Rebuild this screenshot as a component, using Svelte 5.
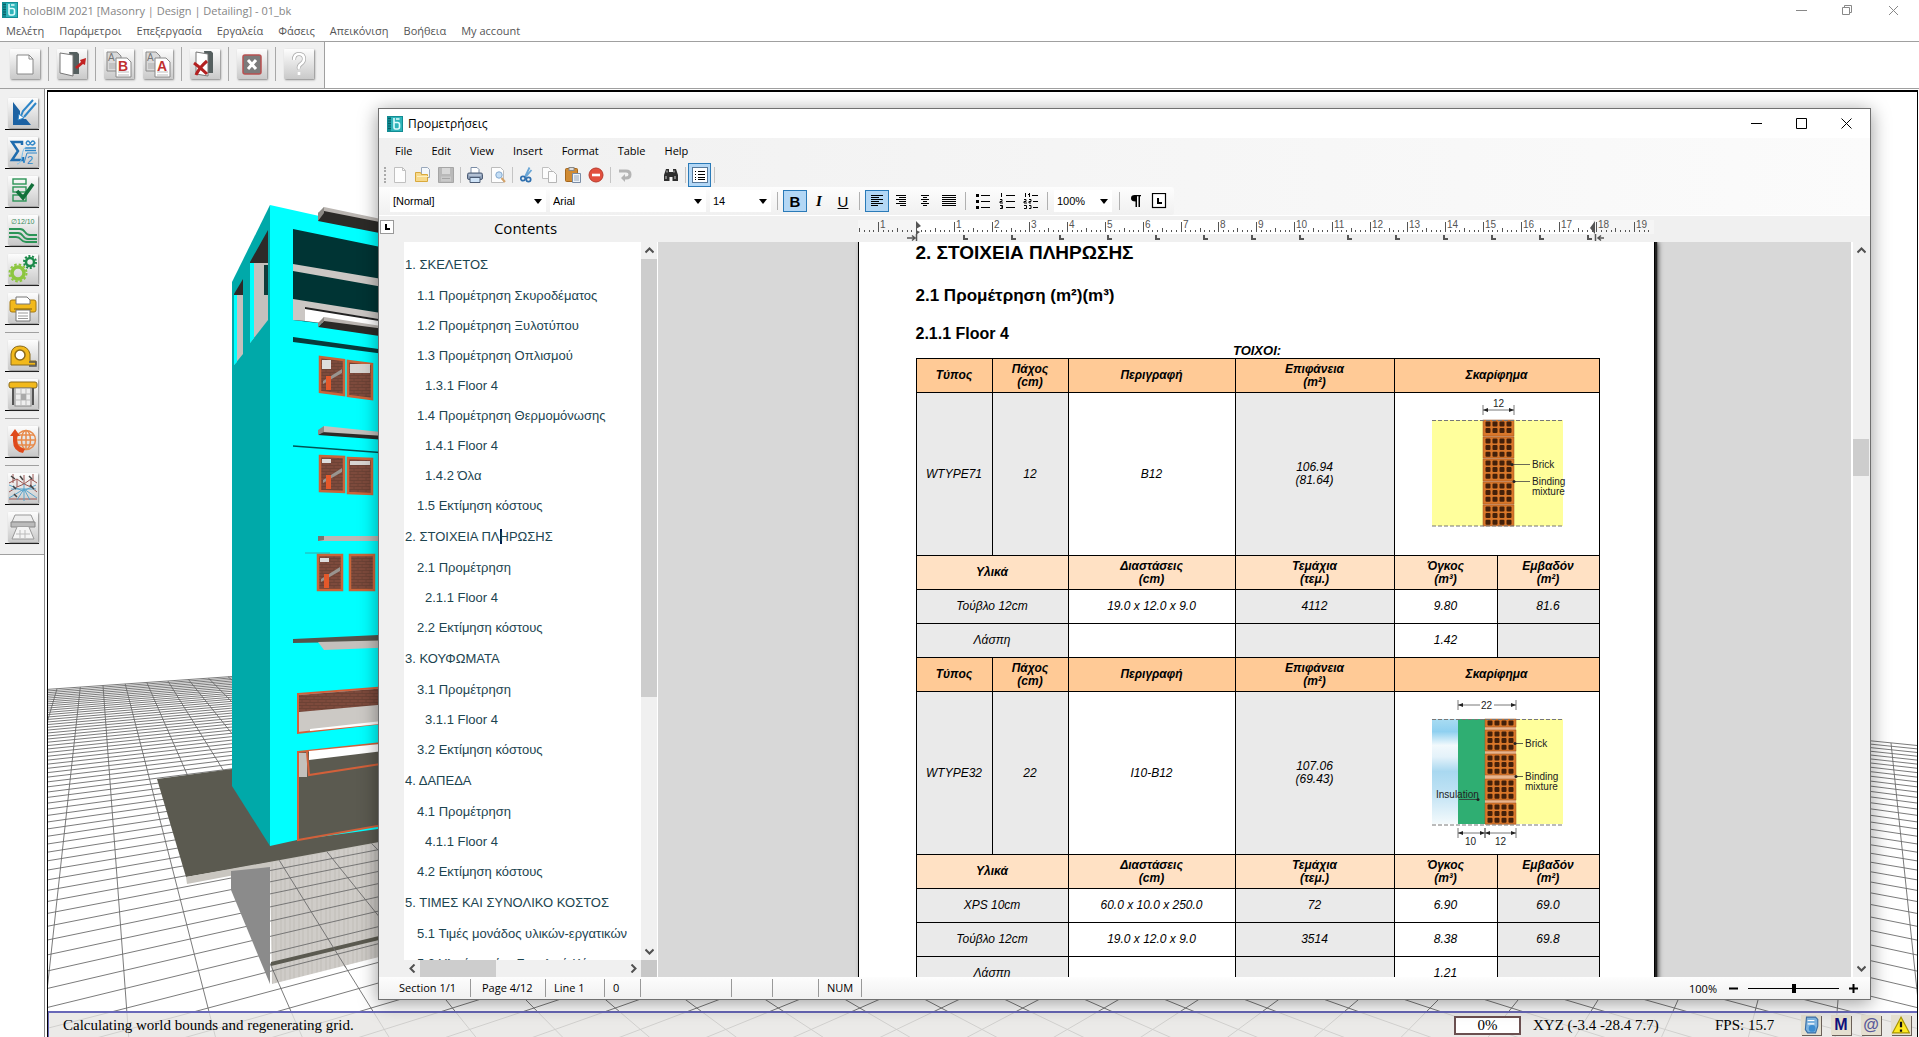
<script>
  const mainMenu = ['Μελέτη', 'Παράμετροι', 'Επεξεργασία', 'Εργαλεία', 'Φάσεις', 'Απεικόνιση', 'Βοήθεια', 'My account'];
  const mainTools = [['new'], ['exit'], ['copyB', 'copyA'], ['discard'], ['stop'], ['help']];
  const sideTools = [
    ['draft', 'sigma', 'check', 'rebar', 'gears', 'printer'],
    ['tape', 'plotter'],
    ['globe'],
    ['mesh', 'scanner']
  ];
  const dialogMenu = ['File', 'Edit', 'View', 'Insert', 'Format', 'Table', 'Help'];
  const fileTools = [['page', 'open', 'save'], ['print', 'preview'], ['cut', 'copy', 'paste', 'delete'], ['undo', 'redo', 'find']];

  const contents = [
    [1, '1. ΣΚΕΛΕΤΟΣ'], [2, '1.1 Προμέτρηση Σκυροδέματος'], [2, '1.2 Προμέτρηση Ξυλοτύπου'],
    [2, '1.3 Προμέτρηση Οπλισμού'], [3, '1.3.1 Floor 4'], [2, '1.4 Προμέτρηση Θερμομόνωσης'],
    [3, '1.4.1 Floor 4'], [3, '1.4.2 Όλα'], [2, '1.5 Εκτίμηση κόστους'],
    [1, '2. ΣΤΟΙΧΕΙΑ ΠΛ', 'ΗΡΩΣΗΣ'], [2, '2.1 Προμέτρηση'], [3, '2.1.1 Floor 4'], [2, '2.2 Εκτίμηση κόστους'],
    [1, '3. ΚΟΥΦΩΜΑΤΑ'], [2, '3.1 Προμέτρηση'], [3, '3.1.1 Floor 4'], [2, '3.2 Εκτίμηση κόστους'],
    [1, '4. ΔΑΠΕΔΑ'], [2, '4.1 Προμέτρηση'], [3, '4.1.1 Floor 4'], [2, '4.2 Εκτίμηση κόστους'],
    [1, '5. ΤΙΜΕΣ ΚΑΙ ΣΥΝΟΛΙΚΟ ΚΟΣΤΟΣ'], [2, '5.1 Τιμές μονάδος υλικών-εργατικών'], [2, '5.2 Υλικά κτιρίου Συνολικά Κόστη']
  ];

  const walls = [
    { type: 'WTYPE71', thick: '12', desc: 'B12', area: '106.94', net: '(81.64)', pic: 1,
      rows: [['Τούβλο 12cm', '19.0 x 12.0 x 9.0', '4112', '9.80', '81.6'], ['Λάσπη', '', '', '1.42', '']] },
    { type: 'WTYPE32', thick: '22', desc: 'I10-B12', area: '107.06', net: '(69.43)', pic: 2,
      rows: [['XPS 10cm', '60.0 x 10.0 x 250.0', '72', '6.90', '69.0'], ['Τούβλο 12cm', '19.0 x 12.0 x 9.0', '3514', '8.38', '69.8'], ['Λάσπη', '', '', '1.21', '']] }
  ];

  // Ground grid: two families of lines, each running to its own vanishing point.
  const vpA = { x: 1872, y: 562 };
  const vpB = { x: 94, y: 562 };
  const base = 1000;
  function cross(vp1, x1, vp2, x2) {
    const m1 = (x1 - vp1.x) / (base - vp1.y);
    const m2 = (x2 - vp2.x) / (base - vp2.y);
    const t = (vp2.x - vp1.x) / (m1 - m2);
    return [vp1.x + m1 * t, vp1.y + t];
  }
  const edgeA = 1678 - 80 * 76;
  const edgeB = 126 + 80 * 54;
  let gridPath = '';
  for (let k = -76; k < 12; k++) {
    const x = 1678 + 80 * k;
    const [px, py] = cross(vpA, x, vpB, edgeB);
    const f = 2;
    gridPath += `M${px.toFixed(1)} ${py.toFixed(1)}L${(vpA.x + (x - vpA.x) * f).toFixed(1)} ${vpA.y + 438 * f}`;
  }
  for (let k = -12; k <= 54; k++) {
    const x = 126 + 80 * k;
    const [px, py] = cross(vpB, x, vpA, edgeA);
    const f = 2;
    gridPath += `M${px.toFixed(1)} ${py.toFixed(1)}L${(vpB.x + (x - vpB.x) * f).toFixed(1)} ${vpB.y + 438 * f}`;
  }

  // Ruler, 96 px per inch, zero at the left text margin.
  const cm = 37.8;
  const zero = 58;
  const ticks = [];
  for (let i = -12; i <= 156; i++) {
    const x = zero + (i * cm) / 8;
    if (x > 1 && x < 794) ticks.push({ x: Math.round(x), size: i % 8 === 0 ? 10 : i % 4 === 0 ? 4 : 2 });
  }
  const labels = [];
  for (let n = -1; n <= 19; n++) if (n !== 0) labels.push({ x: Math.round(zero + n * cm), n: Math.abs(n) });
  const stops = Array.from({ length: 14 }, (_, i) => zero + 48 * (i + 1));

  const bricks1 = [[24, 16, 2], [41, 21, 3], [63, 22, 3], [86, 22, 3], [109, 21, 3]];
  const bricks2 = [[24, 8, 1], [35, 21, 3], [59, 21, 3], [84, 21, 3], [108, 21, 3]];
  const windows = [
    { x: 320, y: 357, k: 3 }, { x: 348, y: 361, k: 3 }, { x: 320, y: 456, k: 1 },
    { x: 348, y: 458, k: 1 }, { x: 318, y: 555, k: 0 }, { x: 350, y: 555, k: 0 }
  ];
  let zoom = $state(50);
</script>

{#snippet logo()}
  <svg class="logo" viewBox="0 0 16 16" aria-hidden="true">
    <rect width="16" height="16" fill="#128c93" />
    <rect x="4" y="1" width="11" height="14" fill="#2fb4ba" />
    <path d="M1 2.500h3M1 5h3M1 7.500h3M1 10h3M1 12.500h3" stroke="#0a5f66" />
    <path d="M7 2v9.500q0 1.500 1.500 1.500h2q2 0 2-2V8.500q0-2-2-2H7M9 3h3.500" fill="none" stroke="#dffcfd" stroke-width="1.600" />
  </svg>
{/snippet}

{#snippet bigIcon(name)}
  <svg class="big" viewBox="0 0 30 30" aria-hidden="true">
    {#if name === 'new'}
      <path d="M7 6h12l4 4v15H7z" fill="#fff" stroke="#888" /><path d="M19 6v4h4" fill="none" stroke="#888" />
    {:else if name === 'exit'}
      <path d="M12 3h8l2 2v20h-6z" fill="#555f5f" /><path d="M3 4l13 2v21L3 24z" fill="#fff" stroke="#777" />
      <path d="M18 18l6-5-1-2 6-2-1 7-2-1-6 5z" fill="#c22222" />
    {:else if name === 'copyB' || name === 'copyA'}
      <path d="M3 3h10l4 4v15H3z" fill="#dadada" stroke="#888" /><path d="M5 15h8M5 17h8M5 19h8" stroke="#aaa" />
      <text x="4" y="12" font-size="10" fill="#777">A</text>
      <path d="M12 9h11l4 4v15H12z" fill="#fff" stroke="#888" /><path d="M14 23h11M14 26h11" stroke="#bbb" />
      <text x="14" y="22" font-size="14" font-weight="700" fill="#c03030">{name === 'copyB' ? 'B' : 'A'}</text>
    {:else if name === 'discard'}
      <path d="M14 2h7l2 2v20h-6z" fill="#555f5f" /><path d="M6 3l12 2v22L6 25z" fill="#fff" stroke="#777" />
      <path d="M4 14q7 5 13 11M17 12Q9 19 6 26" fill="none" stroke="#b32020" stroke-width="3" />
    {:else if name === 'stop'}
      <rect x="6" y="6" width="18" height="19" rx="2" fill="#7b7b7b" stroke="#b85050" stroke-width="1.500" />
      <path d="M11 11l8 9M19 11l-8 9" stroke="#fff" stroke-width="3" />
    {:else if name === 'help'}
      <path d="M10 11q0-6 5-6t5 5q0 3-3 5t-2 5" fill="none" stroke="#aaa" stroke-width="4" /><path d="M10 11q0-6 5-6t5 5q0 3-3 5t-2 5M15 23v3" fill="none" stroke="#fff" stroke-width="2.600" />
    {:else if name === 'draft'}
      <path d="M5 4v23h18l-5-6h-6V13z" fill="#1c62a3" /><path d="M13 18l2-5L25 2M16 19L28 5" stroke="#2e86c8" stroke-width="2" fill="none" /><path d="M10 22l1-6 5 4z" fill="#fff" stroke="#2e86c8" />
    {:else if name === 'sigma'}
      <path d="M14 8V5H4l6 9-6 9h11v-3" fill="none" stroke="#1f6cae" stroke-width="2.500" /><path d="M18 6q2-4 4 0t5 0q-2-4-4.500 0t-4.500 0M17 11h11M17 13.500h11" fill="none" stroke="#2e86c8" stroke-width="1.300" />
      <path d="M14 20l2 6 3-10h10" fill="none" stroke="#2e86c8" /><text x="19" y="27" font-size="11" fill="#2e86c8">2</text><path d="M9 27q4 0 5-8t4-9" fill="none" stroke="#7cc0ea" />
    {:else if name === 'check'}
      <g fill="none" stroke="#2b9456" stroke-width="1.400"><rect x="5" y="3" width="13" height="5" /><rect x="5" y="11" width="13" height="5" /><rect x="5" y="19" width="13" height="6" /></g>
      <path d="M9 15l6 7L25 8" fill="none" stroke="#12703a" stroke-width="3.500" />
    {:else if name === 'rebar'}
      <text x="3" y="9" font-size="7" fill="#3a8a5c">∅12/10</text>
      <g fill="none" stroke="#2b9456" stroke-width="1.800"><path d="M1 14h11q3 0 5 3t5 3h7M1 18h9q3 0 5 3t5 3h9M1 22h7q3 0 5 2.500t5 2.500h11" /></g>
    {:else if name === 'gears'}
      <circle cx="10" cy="19" r="6" fill="none" stroke="#8cc63f" stroke-width="3.500" /><circle cx="10" cy="19" r="8.500" fill="none" stroke="#8cc63f" stroke-width="2" stroke-dasharray="2.500 2" />
      <circle cx="22" cy="8" r="4" fill="none" stroke="#1c8a4a" stroke-width="2.500" /><circle cx="22" cy="8" r="6" fill="none" stroke="#1c8a4a" stroke-width="2" stroke-dasharray="2 1.700" />
    {:else if name === 'printer'}
      <rect x="2" y="7" width="26" height="12" rx="2" fill="#f2b91c" stroke="#a67a10" /><path d="M8 11V4h11l3 3v4z" fill="#fff" stroke="#777" /><path d="M8 17h14v11H8z" fill="#fff" stroke="#777" /><path d="M10 20h10M10 23h10M10 25.500h10" stroke="#999" /><path d="M6 16h18" stroke="#7b5a0c" />
    {:else if name === 'tape'}
      <path d="M3 25V14Q4 6 12 6t10 8v7h6v4z" fill="#f2b91c" stroke="#8a6a1a" /><circle cx="12" cy="15" r="5" fill="#fff" stroke="#8a6a1a" stroke-width="1.500" /><path d="M21 22h7v4h-7" fill="none" stroke="#555" stroke-width="1.500" />
    {:else if name === 'plotter'}
      <rect x="1" y="3" width="28" height="6" rx="2" fill="#f2b91c" stroke="#8a6a1a" /><path d="M5 9v17M25 9v17" stroke="#555" stroke-width="2" /><rect x="7" y="9" width="16" height="18" fill="#eee" stroke="#888" /><path d="M7 15h16M7 21h16M13 9v18M18 9v18" stroke="#bbb" /><rect x="13" y="15" width="5" height="6" fill="#aaa" />
    {:else if name === 'globe'}
      <g fill="none" stroke="#e88a4a" stroke-width="1.500"><circle cx="18" cy="14" r="9.500" /><ellipse cx="18" cy="14" rx="4.500" ry="9.500" /><path d="M9 14h18M10 9h16M10 19h16M18 4v20" /></g>
      <path d="M15 27Q5 25 5 15V10H2l5-7 5 7H9v5q0 6 8 8z" fill="#df4a1c" />
    {:else if name === 'mesh'}
      <path d="M1 10l8-4 7 5 7-5 6 4M1 19l8-5 7-3 7 3 6 5M5 1v9M16 2v8M25 1v7M9 6v8M23 6v8M1 26h28" stroke="#9a5550" fill="none" /><path d="M1 25l15-9 13 9M16 11v17M3 16h25M1 12l14 6 13-6M9 27l7-11 6 11" fill="none" stroke="#5aa5cc" /><path d="M3 3l4 3M12 3l3 4M21 3l3 3M5 13l3 3M22 12l4 4M6 21l3 3" stroke="#444" stroke-width="1.500" />
    {:else if name === 'scanner'}
      <path d="M7 3h16l3 7H4z" fill="#eee" stroke="#999" /><path d="M3 10h24v5H3z" fill="#bbb" stroke="#888" /><path d="M9 15l-5 12h22l-5-12" fill="#f4f4f4" stroke="#999" /><path d="M8 22h14M12 18v8M17 18v8" stroke="#bbb" />
    {/if}
  </svg>
{/snippet}

{#snippet smallIcon(name)}
  <svg class="small" viewBox="0 0 16 16" aria-hidden="true">
    {#if name === 'page'}
      <path d="M2.500.5h8l3 3v12h-11z" fill="#fdfdfd" stroke="#c0c0c0" /><path d="M10.500.5v3h3" fill="none" stroke="#c0c0c0" />
    {:else if name === 'open'}
      <path d="M6.500.5h6l2 2v8h-8z" fill="#f4f8fc" stroke="#9aa8bb" /><path d="M.5 14.500v-9h5l1 2h6v7z" fill="#f7d98a" stroke="#d9a93c" /><path d="M2 9.500h12" stroke="#fdf0c2" />
    {:else if name === 'save'}
      <path d="M.5.5h15v15H.5z" fill="#b9b9b9" stroke="#a5a5a5" /><path d="M4 1h8v6H4z" fill="#d8d8d8" /><path d="M3 9.500h10v5H3z" fill="#c9c9c9" /><path d="M4 11.500h8" stroke="#a5a5a5" />
    {:else if name === 'print'}
      <path d="M4 6V.5h6l2 2V6" fill="#fff" stroke="#7a8ca5" /><rect x=".5" y="6" width="15" height="6.500" rx="1.500" fill="#8fa0b8" stroke="#4c5c75" /><path d="M2 8h12" stroke="#d5e0ee" /><path d="M3 10.500h10v5H3z" fill="#cfe3f7" stroke="#4c5c75" />
    {:else if name === 'preview'}
      <path d="M1.500.5h9l3 3v12h-12z" fill="#fdfdfd" stroke="#bcbcbc" /><circle cx="9" cy="8" r="3.200" fill="#c4def5" stroke="#83a9d0" /><path d="M11.500 11l3.500 4" stroke="#d4a36a" stroke-width="2" />
    {:else if name === 'cut'}
      <path d="M10.500.5L6 10M12.500 3L7 9.500" stroke="#6aa6d6" stroke-width="1.800" /><circle cx="4" cy="11.500" r="2.200" fill="none" stroke="#2f6fae" stroke-width="1.700" /><circle cx="9.500" cy="12.500" r="2.200" fill="none" stroke="#2f6fae" stroke-width="1.700" />
    {:else if name === 'copy'}
      <path d="M.5.5h6l3 3v8h-9z" fill="#fcfcfc" stroke="#c0c0c0" /><path d="M6.500 4.500h5l3 3v8h-8z" fill="#fcfcfc" stroke="#b5b5b5" />
    {:else if name === 'paste'}
      <rect x=".5" y="1.500" width="12" height="13" rx="1" fill="#d08b33" stroke="#a5661c" /><rect x="4" y=".5" width="5" height="3" fill="#ddd" stroke="#888" /><path d="M7.500 6.500h8v9h-8z" fill="#eef3f8" stroke="#7a8ca5" /><path d="M9 9h5M9 11h5M9 13h5" stroke="#9aa8bb" />
    {:else if name === 'delete'}
      <circle cx="8" cy="8" r="7" fill="#e2503f" stroke="#b93a2c" /><path d="M4 8h8" stroke="#fff" stroke-width="2.600" />
    {:else if name === 'undo'}
      <path d="M2 4h7q4 0 4 3.500T9 11H7" fill="none" stroke="#b4b4b4" stroke-width="3" /><path d="M8 7v8l-4-4z" fill="#b4b4b4" />
    {:else if name === 'find'}
      <path d="M3 2h3v3h4V2h3l2 6v6h-5.500v-4h-3v4H1V8z" fill="#2d2d2d" /><path d="M3 9v3M12 9v3M4 3.500v2M11 3.500v2" stroke="#cfcfcf" />
    {:else if name === 'list'}
      <rect x=".5" y=".5" width="15" height="15" fill="#fff" stroke="#56789a" /><path d="M6 4.500h7M6 7.500h7M6 10.500h7M6 12.500h7" stroke="#000" /><path d="M3 4.500h1M3 7.500h1M3 10.500h1M3 12.500h1" stroke="#000" />
    {:else if name === 'left'}
      <path d="M2 2.500h12M2 4.500h8M2 6.500h12M2 8.500h8M2 10.500h12M2 12.500h7" stroke="#000" />
    {:else if name === 'right'}
      <path d="M3 2.500h10M6 4.500h7M3 6.500h10M6 8.500h7M3 10.500h10M7 12.500h6" stroke="#000" />
    {:else if name === 'center'}
      <path d="M4 2.500h8M6 4.500h4M4 6.500h8M6 8.500h4M4 10.500h8M6 12.500h4" stroke="#000" />
    {:else if name === 'justify'}
      <path d="M1 2.500h14M1 4.500h14M1 6.500h14M1 8.500h14M1 10.500h14M1 12.500h14" stroke="#000" />
    {:else if name === 'bullets'}
      <path d="M6 2.500h9M6 8.500h9M6 14.500h9" stroke="#000" /><path d="M1 1h3v3H1zM1 7h3v3H1zM1 13h3v3H1z" />
    {:else if name === 'numbers'}
      <path d="M7 2.500h9M7 8.500h9M7 14.500h9M2.500 0v4M1 6.500h2v2H1v1.500h3M1 12.500h2.500v3H1M2 14h1" fill="none" stroke="#000" />
    {:else if name === 'outline'}
      <path d="M2.500 0v4M5 1.500h2M6.500 0v4M9 2.500h6M1 6.500h2v2H1v1.500h3M6 6.500h2v2H6v1.500h2M10 8.500h5M1 12.500h2.500v3H1M6 12.500h2v3H6M10 14.500h5" fill="none" stroke="#000" />
    {:else if name === 'pilcrow'}
      <path d="M8 2h6v1.200h-1V14h-1.500V3.200H10V14H8.500V8.500Q4 8.500 4 5.200T8 2z" />
    {:else if name === 'tabstop'}
      <rect x="1.500" y=".5" width="13" height="14" fill="#fff" stroke="#000" stroke-width="1.200" /><path d="M6 5v6h5V9H8V5z" />
    {/if}
  </svg>
{/snippet}

{#snippet chevron(d)}
  <svg class="chev" viewBox="0 0 9 9" aria-hidden="true"><path {d} fill="none" stroke="#505050" stroke-width="2" /></svg>
{/snippet}

{#snippet brickWall(x, rows)}
  <rect {x} y="24" width="31" height="106" fill="#e9b48c" />
  {#each rows as [y, h, n]}
    <rect x={x} y={y} width="31" height={h} fill="#d9772a" stroke="#9a5220" stroke-width=".5" />
    {#each Array(n) as _, r}
      {#each Array(4) as _, c}
        <rect x={x + 2.500 + c * 7} y={y + 1.500 + r * 6.600} width="5" height="5" rx="1" fill="#43200a" />
      {/each}
    {/each}
  {/each}
{/snippet}

{#snippet dim(x1, x2, y)}
  <path d="M{x1} {y}H{x2}M{x1} {y - 5}v10M{x2} {y - 5}v10" stroke="#555" stroke-width=".8" />
  <path d="M{x1} {y}l5-2v4zM{x2} {y}l-5-2v4z" fill="#222" />
{/snippet}

<div class="app">
  <header class="titlebar">
    {@render logo()}
    <span class="apptitle">holoBIM 2021 [Masonry | Design | Detailing] - 01_bk</span>
    <div class="controls main-controls">
      <button aria-label="Minimize"><svg viewBox="0 0 11 11"><path d="M0 5.500h11" /></svg></button>
      <button aria-label="Restore"><svg viewBox="0 0 11 11"><path d="M.5 2.500h7v7h-7zM2.500 2.500v-2h7v7h-2" /></svg></button>
      <button aria-label="Close"><svg viewBox="0 0 11 11"><path d="M1 1l9 9M10 1l-9 9" /></svg></button>
    </div>
  </header>
  <nav class="mainmenu">
    {#each mainMenu as item}<button>{item}</button>{/each}
  </nav>
  <div class="toolband">
    <div class="maintools">
      {#each mainTools as group}
        <div class="group">
          {#each group as t}<button class="bigbtn" aria-label={t}>{@render bigIcon(t)}</button>{/each}
        </div>
      {/each}
    </div>
  </div>

  <div class="workspace">
    <aside class="side">
      <div class="sidetools">
        {#each sideTools as group}
          <div class="sidegroup">
            {#each group as t}<div class="slot"><button class="bigbtn" aria-label={t}>{@render bigIcon(t)}</button></div>{/each}
          </div>
        {/each}
      </div>
    </aside>

    <main class="viewport">
      <svg class="scene" viewBox="48 92 1869 945" preserveAspectRatio="xMinYMin slice" aria-label="3D view">
        <defs>
          <pattern id="brick" width="8" height="6" patternUnits="userSpaceOnUse"><rect width="8" height="6" fill="#7d4a3c" /><path d="M0 .5h8M0 3.500h8M2 .5v3M6 3.500v3" stroke="#6a4034" stroke-width=".8" /></pattern>
          <pattern id="board" width="9" height="20" patternUnits="userSpaceOnUse"><rect width="9" height="20" fill="#cfccc8" /><path d="M2 0v20M6 0v20" stroke="#c2beb9" stroke-width="1" /></pattern>
          <clipPath id="basement"><path d="M270 862L379 842V960L272 984z" /></clipPath>
        </defs>
        <path d={gridPath} class="grid" />
        <path d="M157 779L232 769L400 760V840L186 877z" fill="#5b5a50" />
        <path d="M186 877L379 842V848L187 884z" fill="#c9c6c0" />
        <path d="M231 871L270 867V984L231 890z" fill="#8b8b8b" />
        <path d="M270 863L379 843V957L272 984z" fill="url(#board)" />
        <path d="M271 962L379 936V940L271 966z" fill="#5b5a50" />
        <path d={gridPath} class="grid" clip-path="url(#basement)" />
        <path d="M232 282L270 205V846L232 786z" fill="#00a9a9" />
        <path d="M270 205L400 234V826L297 840L270 846z" fill="#0ff" />
        <path d="M234 294L243 279V295H234zM250 262L268 230V265H250z" fill="#2e2a29" />
        <path d="M234 295H243V354L234 365z" fill="#c4c0bd" /><path d="M234 295H237V362L234 365z" fill="#0ff" />
        <path d="M250 263H268V320L250 343z" fill="#c4c0bd" /><path d="M250 263H254V338L250 343z" fill="#0ff" /><path d="M264 265h4v30h-4z" fill="#103a3a" />
        <path d="M293 229L400 251V333L293 320z" fill="#003434" />
        <path d="M293 264L400 282V290L293 271zM293 299L400 316V323L293 308z" fill="#cbc7c4" />
        <path d="M305 308L400 322V333L305 321z" fill="#fff" /><path d="M305 307L379 319V321L305 309z" fill="#222" />
        <path d="M293 307H305V321L293 320z" fill="#cbc7c4" />
        <path d="M324 207L400 223V227L320 212z" fill="#bbb6b2" /><path d="M324 211L400 226V237L318 221V213z" fill="#2c2a27" /><path d="M318 213l6-6v6l-6 8z" fill="#8c8984" />
        <path d="M324 317L400 329V332L320 322z" fill="#bbb6b2" /><path d="M324 321L400 331V339L318 327z" fill="#2c2a27" /><path d="M318 323l6-6v4l-6 6z" fill="#8c8984" />
        <path d="M324 426L400 434V439L322 433z" fill="#c4c0bc" /><path d="M322 432L400 437V441L318 435z" fill="#2c2a27" /><path d="M318 430l6-4v6l-6 3z" fill="#8c8984" />
        <path d="M318 536H400V541H318z" fill="#bbb7b3" /><path d="M318 536h6v4l-6 1z" fill="#77746f" />
        <path d="M293 337L400 352V356L293 342z" fill="#073b3b" /><path d="M293 446L400 454" stroke="#055" stroke-width="1.500" /><path d="M305 553h25" stroke="#3aa" />
        {#each windows as w, i}
          <g>
            <path d="M{w.x} {w.y}l24 {w.k}v35l-24-{w.k}z" fill="url(#brick)" stroke="#c9653a" stroke-width="2.500" />
            {#if i % 2 === 0}
              <path d="M{w.x + 2} {w.y + 3}h9v{i === 0 ? 9 : 4}h-9z" fill="#ddd" /><path d="M{w.x + 3} {w.y + 24}l19-12v4l-19 11z" fill="#99948f" /><path d="M{w.x + 6} {w.y + 19}h5v14h-5z" fill="#e4582a" />
            {:else if i !== 5}
              <path d="M{w.x + 2} {w.y + 3}h20v{i === 1 ? 9 : 4}h-20z" fill="#d8d5d2" />
            {/if}
          </g>
        {/each}
        <path d="M293 639L400 634V641L293 643z" fill="#55544b" /><path d="M318 642L400 640V647L324 650z" fill="#c4c0bc" />
        <path d="M298 694L400 686V721L298 733z" fill="#ccc9c5" stroke="#d2603a" stroke-width="2" /><path d="M299 695L400 687V703L299 712z" fill="url(#brick)" /><path d="M310 729L400 719V722L310 731z" fill="#fff" />
        <path d="M298 752L400 741V822L298 840z" fill="#5b5a50" stroke="#d2603a" stroke-width="2" />
        <path d="M309 751L400 742V749L309 760z" fill="#fff" /><path d="M299 753h8v24h-8z" fill="#c4c0bc" /><path d="M307 752L309 775L400 761" fill="none" stroke="#d2603a" stroke-width="2" />
      </svg>

      <footer class="appstatus">
        <span class="msg">Calculating world bounds and regenerating grid.</span>
        <div class="progress">0%</div>
        <span class="xyz">XYZ (-3.4 -28.4 7.7)</span>
        <span class="fps">FPS: 15.7</span>
        <div class="tray">
          <button aria-label="Server"><svg viewBox="0 0 16 16"><path d="M4 1h8l2 2v6l-2 6H5l-2-3z" fill="#7db4e0" stroke="#3a6ea5" /><path d="M5 4h6M5 7h6" stroke="#fff" /><circle cx="9" cy="11" r="3" fill="#3c8cd0" /></svg></button>
          <button aria-label="Mode"><b>M</b></button>
          <button aria-label="Zoom at"><b class="at">@</b></button>
          <button aria-label="Warnings"><svg viewBox="0 0 16 16"><path d="M8 1l7.500 14H.5z" fill="#ffe923" stroke="#a89500" /><path d="M8 5v5M8 12v2" stroke="#111" stroke-width="2" /></svg></button>
        </div>
      </footer>
    </main>
  </div>

  <section class="dialog" aria-label="Προμετρήσεις">
    <header class="dtitle">
      {@render logo()}
      <span>Προμετρήσεις</span>
      <div class="controls">
        <button aria-label="Minimize"><svg viewBox="0 0 11 11"><path d="M0 5.500h11" /></svg></button>
        <button aria-label="Maximize"><svg viewBox="0 0 11 11"><path d="M.5.5h10v10H.5z" /></svg></button>
        <button aria-label="Close"><svg viewBox="0 0 11 11"><path d="M.5.5l10 10M10.500.5l-10 10" /></svg></button>
      </div>
    </header>
    <nav class="dmenu">
      {#each dialogMenu as item}<button>{item}</button>{/each}
    </nav>
    <div class="filebar">
      <span class="grip"></span>
      {#each fileTools as group}
        <div class="fgroup">
          {#each group as t}<button class="ibtn" aria-label={t}>{@render smallIcon(t)}</button>{/each}
        </div>
      {/each}
      <div class="fgroup toggle"><button class="ibtn on" aria-label="Contents list">{@render smallIcon('list')}</button></div>
    </div>
    <div class="formatrow">
      <div class="formatbar">
        <span class="combo style"><select aria-label="Style"><option>[Normal]</option></select></span>
        <span class="combo style"><select aria-label="Font"><option>Arial</option></select></span>
        <span class="combo size"><select aria-label="Size"><option>14</option></select></span>
        <div class="pgroup">
          <button class="ibtn on letter" aria-label="Bold"><b>B</b></button>
          <button class="ibtn letter" aria-label="Italic"><i>I</i></button>
          <button class="ibtn letter" aria-label="Underline"><u>U</u></button>
        </div>
        <div class="pgroup">
          <button class="ibtn on" aria-label="Align left">{@render smallIcon('left')}</button>
          {#each ['right', 'center', 'justify'] as t}<button class="ibtn" aria-label={t}>{@render smallIcon(t)}</button>{/each}
        </div>
        <div class="pgroup">
          {#each ['bullets', 'numbers', 'outline'] as t}<button class="ibtn" aria-label={t}>{@render smallIcon(t)}</button>{/each}
        </div>
        <div class="pgroup"><span class="combo zoomsel"><select aria-label="Zoom"><option>100%</option></select></span></div>
        <div class="pgroup last">
          {#each ['pilcrow', 'tabstop'] as t}<button class="ibtn" aria-label={t}>{@render smallIcon(t)}</button>{/each}
        </div>
      </div>
    </div>

    <div class="rulerrow">
      <button class="tabkind" aria-label="Tab type"><svg viewBox="0 0 14 14"><path d="M5 4v6h5V8H7V4z" /></svg></button>
      <h2>Contents</h2>
      <div class="rulerwrap">
        <svg class="ruler" viewBox="0 0 796 25" aria-hidden="true">
          <rect x="0" y="3" width="796" height="14" fill="#f5f5f5" /><rect x="58" y="3" width="677" height="14" fill="#fff" />
          {#each ticks as t}<rect x={t.x} y={15 - t.size} width="1" height={t.size} fill="#555" />{/each}
          {#each labels as l}<text x={l.x + 2} y="11" font-size="10" fill="#555">{l.n}</text>{/each}
          {#each stops as s}<path d="M{s - 1} 18v5h5v-2h-3v-3z" fill="#555" />{/each}
          <path d="M58 4l5 5-5 3zM58 13l4 2-4 3zM737 4v13l-5-6z" fill="#555" />
          <path d="M49 21h7M54 18.500l3 2.500-3 2.500M58.500 17v7M737.500 17v7M740 21h6M743 18.500l-3 2.500 3 2.500" fill="none" stroke="#555" stroke-width="1.500" />
        </svg>
      </div>
    </div>

    <div class="body">
      <div class="panel">
        <div class="list">
          {#each contents as [level, text, rest]}
            <a href="#top" class="l{level}">{text}{#if rest}<span class="caret"></span>{rest}{/if}</a>
          {/each}
        </div>
        <div class="vbar">
          <button aria-label="Scroll up">{@render chevron('M.5 6.500l4-4 4 4')}</button>
          <div class="track"><div class="thumb vthumb"></div></div>
          <button aria-label="Scroll down">{@render chevron('M.5 2.500l4 4 4-4')}</button>
        </div>
        <div class="hbar">
          <button aria-label="Scroll left">{@render chevron('M6.500.5l-4 4 4 4')}</button>
          <div class="track"><div class="thumb hthumb"></div></div>
          <button aria-label="Scroll right">{@render chevron('M2.500.5l4 4-4 4')}</button>
        </div>
        <div class="corner"></div>
      </div>

      <div class="doc">
        <article class="page">
          <h1>2. ΣΤΟΙΧΕΙΑ ΠΛΗΡΩΣΗΣ</h1>
          <h3>2.1 Προμέτρηση (m²)(m³)</h3>
          <h4>2.1.1 Floor 4</h4>
          <p class="cap">ΤΟΙΧΟΙ:</p>
          <table>
            <colgroup><col class="c1" /><col class="c1" /><col class="c3" /><col class="c4" /><col class="c5" /><col class="c6" /></colgroup>
            <tbody>
              {#each walls as w}
                <tr class="head"><th>Τύπος</th><th>Πάχος<br />(cm)</th><th>Περιγραφή</th><th>Επιφάνεια<br />(m²)</th><th colspan="2">Σκαρίφημα</th></tr>
                <tr class="pic">
                  <td class="g">{w.type}</td><td class="g">{w.thick}</td><td>{w.desc}</td><td class="g">{w.area}<br />{w.net}</td>
                  <td colspan="2">
                    {#if w.pic === 1}
                      <svg class="sketch" viewBox="0 0 140 156" aria-label="Brick wall section">
                        <rect x="5" y="24" width="131" height="106" fill="#ffff9c" />
                        {@render brickWall(56, bricks1)}
                        <path d="M5 24.500H137M5 130H137" stroke="#777" stroke-dasharray="4 2" />
                        {@render dim(56, 87, 14)}
                        <text x="66" y="11">12</text>
                        <path d="M84 68.500H103M86 85.500H103" stroke="#444" stroke-width=".8" /><circle cx="85" cy="68.500" r="1.500" /><circle cx="87" cy="85.500" r="1.500" />
                        <text x="105" y="72">Brick</text><text x="105" y="89">Binding</text><text x="105" y="99">mixture</text>
                      </svg>
                    {:else}
                      <svg class="sketch" viewBox="0 0 140 156" aria-label="Insulated wall section">
                        <defs><linearGradient id="sky" x1="0" y1="0" x2="0" y2="1"><stop offset="0" stop-color="#a9dcf2" /><stop offset=".12" stop-color="#8fd0f0" /><stop offset=".25" stop-color="#f2f9fc" /><stop offset=".36" stop-color="#e4f2fa" /><stop offset=".5" stop-color="#a9d8f0" /><stop offset=".7" stop-color="#bfe2f4" /><stop offset="1" stop-color="#f4fafc" /></linearGradient></defs>
                        <rect x="5" y="24" width="26" height="105" fill="url(#sky)" />
                        <rect x="31" y="24" width="27" height="105" fill="#2fae72" />
                        <rect x="89" y="24" width="47" height="105" fill="#ffff9c" />
                        {@render brickWall(58, bricks2)}
                        <path d="M5 24.500H137M5 130H137" stroke="#777" stroke-dasharray="4 2" />
                        {@render dim(31, 89, 10)}
                        <rect x="53" y="6" width="14" height="8" fill="#fff" />
                        <text x="54" y="14">22</text>
                        <path d="M88 48.500H96M89 81.500H96M32 104.500H50" stroke="#333" stroke-width=".8" /><circle cx="88" cy="48.500" r="1.500" /><circle cx="89" cy="81.500" r="1.500" /><circle cx="51" cy="104.500" r="1.500" />
                        <text x="98" y="52">Brick</text><text x="98" y="85">Binding</text><text x="98" y="95">mixture</text><text x="9" y="103">Insulation</text>
                        {@render dim(31, 58, 138)}
                        {@render dim(58, 89, 138)}
                        <text x="38" y="150">10</text><text x="68" y="150">12</text>
                      </svg>
                    {/if}
                  </td>
                </tr>
                <tr class="sub"><th colspan="2">Υλικά</th><th>Διαστάσεις<br />(cm)</th><th>Τεμάχια<br />(τεμ.)</th><th>Όγκος<br />(m³)</th><th>Εμβαδόν<br />(m²)</th></tr>
                {#each w.rows as r}
                  <tr><td class="g" colspan="2">{r[0]}</td><td>{r[1]}</td><td class="g">{r[2]}</td><td>{r[3]}</td><td class="g">{r[4]}</td></tr>
                {/each}
              {/each}
            </tbody>
          </table>
        </article>
      </div>
      <div class="vbar docbar">
        <button aria-label="Scroll up">{@render chevron('M.5 6.500l4-4 4 4')}</button>
        <div class="track"><div class="thumb dthumb"></div></div>
        <button aria-label="Scroll down">{@render chevron('M.5 2.500l4 4 4-4')}</button>
      </div>
    </div>

    <footer class="dstatus">
      <span class="s1">Section 1/1</span><span class="s2">Page 4/12</span><span class="s3">Line 1</span><span class="s4">0</span>
      <span class="s5"></span><span class="s6"></span><span class="s7"></span><span class="s8">NUM</span>
      <div class="zoomer">
        <label for="zoom">100%</label>
        <button aria-label="Zoom out"><svg viewBox="0 0 9 9"><path d="M0 4.500h9" /></svg></button>
        <input id="zoom" type="range" min="0" max="100" bind:value={zoom} />
        <button aria-label="Zoom in"><svg viewBox="0 0 9 9"><path d="M0 4.500h9M4.500 0v9" /></svg></button>
      </div>
    </footer>
  </section>
</div>

<style>
  :global(body) { margin: 0; }
  .app { position: relative; display: flex; flex-direction: column; height: 100vh; overflow: hidden; background: #fff; font: 11px 'Open Sans', 'Noto Sans', sans-serif; color: #000; }
  button { border: 0; background: none; padding: 0; margin: 0; font: inherit; color: inherit; }
  svg { display: block; }
  h1, h2, h3, h4, p { margin: 0; }

  .logo { width: 16px; height: 16px; flex: none; }
  .titlebar { display: flex; align-items: center; gap: 5px; height: 20px; padding-left: 2px; color: #858585; }
  .controls { display: flex; margin-left: auto; padding-right: 1px; }
  .controls button { width: 45px; height: 28px; display: flex; align-items: center; justify-content: center; }
  .controls svg { width: 11px; height: 11px; fill: none; stroke: #000; }
  .main-controls { padding-right: 3px; }
  .main-controls button { width: 46px; height: 16px; }
  .main-controls svg { stroke: #888; }
  .mainmenu { display: flex; gap: 15px; height: 21px; padding: 0 6px; color: #555; border-bottom: 1px solid #a0a0a0; }
  .toolband { height: 46px; border-bottom: 1px solid #a0a0a0; display: flex; }
  .maintools { display: flex; background: #f0f0f0; border-right: 1px solid #a0a0a0; padding-left: 2px; }
  .group { display: flex; align-items: center; gap: 9px; padding: 0 8px; border-right: 1px solid #a8a8a8; margin: 5px 0 7px; }
  .group:last-child { border: 0; padding-right: 10px; }
  .bigbtn { width: 30px; height: 30px; background: linear-gradient(#fdfdfd, #c9c9c9); box-shadow: 1px 1px 2px #8a8a8a; border-radius: 1px; }
  .big { width: 30px; height: 30px; font-family: 'Liberation Sans', sans-serif; }

  .workspace { flex: 1; min-height: 0; display: flex; }
  .side { width: 44px; border-right: 1px solid #8a8a8a; background: #fff; }
  .sidetools { background: #f0f0f0; border-bottom: 1px solid #a0a0a0; padding: 4px 5px 3px; }
  .sidegroup { border-bottom: 1px solid #a0a0a0; padding: 5px 0 4px; margin-bottom: 2px; }
  .sidegroup:last-child { border: 0; margin: 0; }
  .slot { height: 31px; padding-left: 3px; border-bottom: 1px solid #000; margin-bottom: 7px; }
  .slot:last-child { margin-bottom: 3px; }
  .viewport { position: relative; flex: 1; min-width: 0; margin: 1px 1px 0 2px; border: 1px solid #000; border-top-width: 2px; border-bottom: 0; overflow: hidden; background: #fff; }
  .scene { position: absolute; inset: 0; width: 100%; height: 100%; }
  .grid { fill: none; stroke: #6c6c6c; stroke-width: .9; }
  .appstatus { position: absolute; left: 0; right: 0; bottom: 0; height: 24px; display: flex; align-items: center; border-top: 2px solid #6868b8; border-left: 1px solid #6868b8; background: #e6e5e2cc; font: 15px 'Liberation Serif', serif; padding: 0 6px 0 14px; }
  .msg { flex: 1; }
  .progress { width: 63px; height: 15px; background: #fff; border: 2px solid #6b5050; text-align: center; line-height: 15px; }
  .xyz { width: 182px; padding-left: 12px; }
  .fps { width: 86px; }
  .tray { display: flex; gap: 10px; }
  .tray button { width: 20px; height: 20px; display: flex; align-items: center; justify-content: center; background: #e4dfd0; box-shadow: 1px 1px 0 #6a6058; }
  .tray svg { width: 18px; height: 18px; }
  .tray b { font: bold 16px 'Liberation Sans', sans-serif; color: #10107c; }
  .tray .at { color: #5a5a9a; }

  .dialog { position: absolute; left: 378px; right: 48px; top: 108px; bottom: 37px; display: flex; flex-direction: column; border: 1px solid #707070; background: #f0f0f0; box-shadow: 0 3px 18px #00000066; }
  .dtitle { display: flex; align-items: center; gap: 5px; height: 29px; flex: none; padding-left: 8px; background: #fff; font-size: 12px; }
  .dmenu { display: flex; gap: 19px; height: 24px; flex: none; padding-left: 16px; background: linear-gradient(90deg, #f0f0f0, #fbfbfb); }
  .filebar { display: flex; align-items: center; height: 25px; flex: none; padding-left: 5px; background: linear-gradient(90deg, #f0f0f0, #fbfbfb); }
  .grip { width: 0; height: 16px; border-left: 2px dotted #aaa; }
  .fgroup { display: flex; align-items: center; border-right: 1px solid #c4c4c4; padding: 0 3px 0 2px; height: 16px; }
  .small { width: 16px; height: 16px; }
  .ibtn { width: 24px; height: 24px; flex: none; display: flex; align-items: center; justify-content: center; }
  .fgroup .ibtn { width: 23px; }
  .on { background: #b3d7f5; box-shadow: inset 0 0 0 1px #2a7ab8; }
  .formatrow { display: flex; height: 28px; flex: none; border-bottom: 1px solid #fff; background: linear-gradient(90deg, #f0f0f0, #fbfbfb); }
  .formatbar { display: flex; align-items: center; padding: 0 3px 0 11px; background: linear-gradient(#fdfdfd, #f0f0f0); border-radius: 0 3px 3px 0; }
  .combo { position: relative; display: flex; height: 22px; background: #fff; margin-right: 4px; }
  .combo select { appearance: none; border: 0; background: none; font: 11px 'Liberation Sans', sans-serif; padding: 0 16px 0 3px; width: 100%; margin: 0; }
  .combo::after { content: ''; position: absolute; right: 4px; top: 9px; border: 4px solid transparent; border-top: 5px solid #000; border-bottom: 0; }
  .style { width: 156px; }
  .size { width: 61px; }
  .pgroup { display: flex; align-items: center; border-left: 1px solid #b0b0b0; margin-left: 4px; padding-left: 5px; height: 18px; }
  .pgroup .ibtn { height: 22px; }
  .size + .pgroup { margin-left: 2px; }
  .zoomsel { width: 58px; margin: 0 3px 0 1px; }
  .last { padding-left: 3px; }
  .letter { font: 15px 'Liberation Sans', sans-serif; }
  .letter i { font-family: 'Liberation Serif', serif; font-weight: 700; }

  .rulerrow { display: flex; height: 26px; flex: none; }
  .tabkind { width: 14px; height: 14px; margin: 4px 11px 0 1px; background: #fff; box-shadow: inset 0 0 0 1px #999; }
  .tabkind svg { width: 14px; height: 14px; }
  .rulerrow h2 { width: 241px; padding-right: 12px; line-height: 24px; text-align: center; font-size: 15px; font-weight: 400; flex: none; }
  .rulerwrap { flex: 1; display: flex; justify-content: center; padding: 1px 16px 0 0; }
  .ruler { width: 796px; height: 25px; font-family: 'Liberation Sans', sans-serif; }

  .body { flex: 1; min-height: 0; display: flex; padding-left: 25px; }
  .panel { width: 253px; flex: none; display: grid; grid-template: minmax(0, 1fr) 17px / minmax(0, 1fr) 16px; background: #fff; border-right: 1px solid #fff; }
  .list { overflow: hidden; padding: 7px 0 0 1px; font: 13px 'Liberation Sans', sans-serif; white-space: nowrap; }
  .list a { display: block; color: #1c4450; text-decoration: none; line-height: 30px; }
  .list .l1 { line-height: 32px; }
  .l2 { padding-left: 12px; }
  .l3 { padding-left: 20px; }
  .caret { display: inline-block; width: 2px; height: 15px; margin-right: -2px; background: #001e50; vertical-align: -3px; }
  .vbar { display: flex; flex-direction: column; background: #f0f0f0; }
  .vbar button, .hbar button { width: 16px; height: 17px; flex: none; display: flex; align-items: center; justify-content: center; }
  .chev { width: 9px; height: 9px; }
  .track { flex: 1; min-height: 0; }
  .hbar { display: flex; background: #f0f0f0; }
  .hbar .track { display: flex; }
  .thumb { background: #cdcdcd; }
  .vthumb { height: 64%; }
  .hthumb { width: 37%; }
  .corner { background: #c8c8c8; }
  .doc { flex: 1; min-width: 0; overflow: hidden; background: #d8d8d8; padding-left: 3px; }
  .page { box-sizing: border-box; width: 797px; min-height: 100%; margin: 0 auto; padding: 0 55px 0 57px; background: #fff; border-left: 1px solid #000; border-right: 1px solid #000; box-shadow: 2px 0 1px #222, 3px 0 5px #333; font-family: 'Liberation Sans', sans-serif; }
  .docbar { border-left: 2px solid #fff; padding-right: 1px; }
  .docbar .track { display: flex; flex-direction: column; }
  .dthumb { height: 37px; margin-top: 180px; }

  h1 { font-size: 19px; line-height: 22px; }
  h3 { font-size: 17px; line-height: 20px; padding-top: 22px; }
  h4 { font-size: 16px; line-height: 20px; padding-top: 18px; }
  .cap { font: italic bold 13px/14px 'Liberation Sans', sans-serif; text-align: center; }
  table { width: 684px; table-layout: fixed; border-collapse: collapse; font: italic 12px/13px 'Liberation Sans', sans-serif; }
  .c1 { width: 76px; } .c3 { width: 167px; } .c4 { width: 159px; } .c5 { width: 103px; } .c6 { width: 102px; }
  th, td { box-sizing: border-box; height: 34px; padding: 0; border: 1px solid #000; text-align: center; vertical-align: middle; overflow: hidden; }
  .pic td { height: 163px; }
  .head th { background: #ffca96; }
  .sub th { background: #ffe1c4; }
  .g { background: #eaeaea; }
  .sketch { width: 140px; height: 156px; margin: 0 auto; font: 10px 'Liberation Sans', sans-serif; fill: #222; }

  .dstatus { display: flex; align-items: center; height: 22px; flex: none; background: linear-gradient(#fdfdfd, #f0f0f0); padding-left: 20px; }
  .dstatus span { box-sizing: border-box; height: 18px; line-height: 18px; border-right: 1px solid #999; white-space: nowrap; }
  .s1 { width: 72px; } .s2 { width: 75px; padding-left: 11px; } .s3 { width: 59px; padding-left: 8px; } .s4 { width: 36px; padding-left: 8px; }
  .s5 { width: 91px; } .s6 { width: 41px; } .s7 { width: 46px; } .s8 { width: 43px; padding-left: 8px; }
  .zoomer { margin-left: auto; display: flex; align-items: center; padding-right: 12px; }
  .zoomer label { padding-right: 12px; }
  .zoomer svg { width: 9px; height: 9px; stroke: #000; stroke-width: 2; }
  .zoomer input { appearance: none; width: 91px; height: 12px; margin: 0 10px; background: linear-gradient(#000, #000) center / 100% 1px no-repeat; }
  .zoomer input::-webkit-slider-thumb { appearance: none; width: 4px; height: 9px; background: #000; }
</style>
